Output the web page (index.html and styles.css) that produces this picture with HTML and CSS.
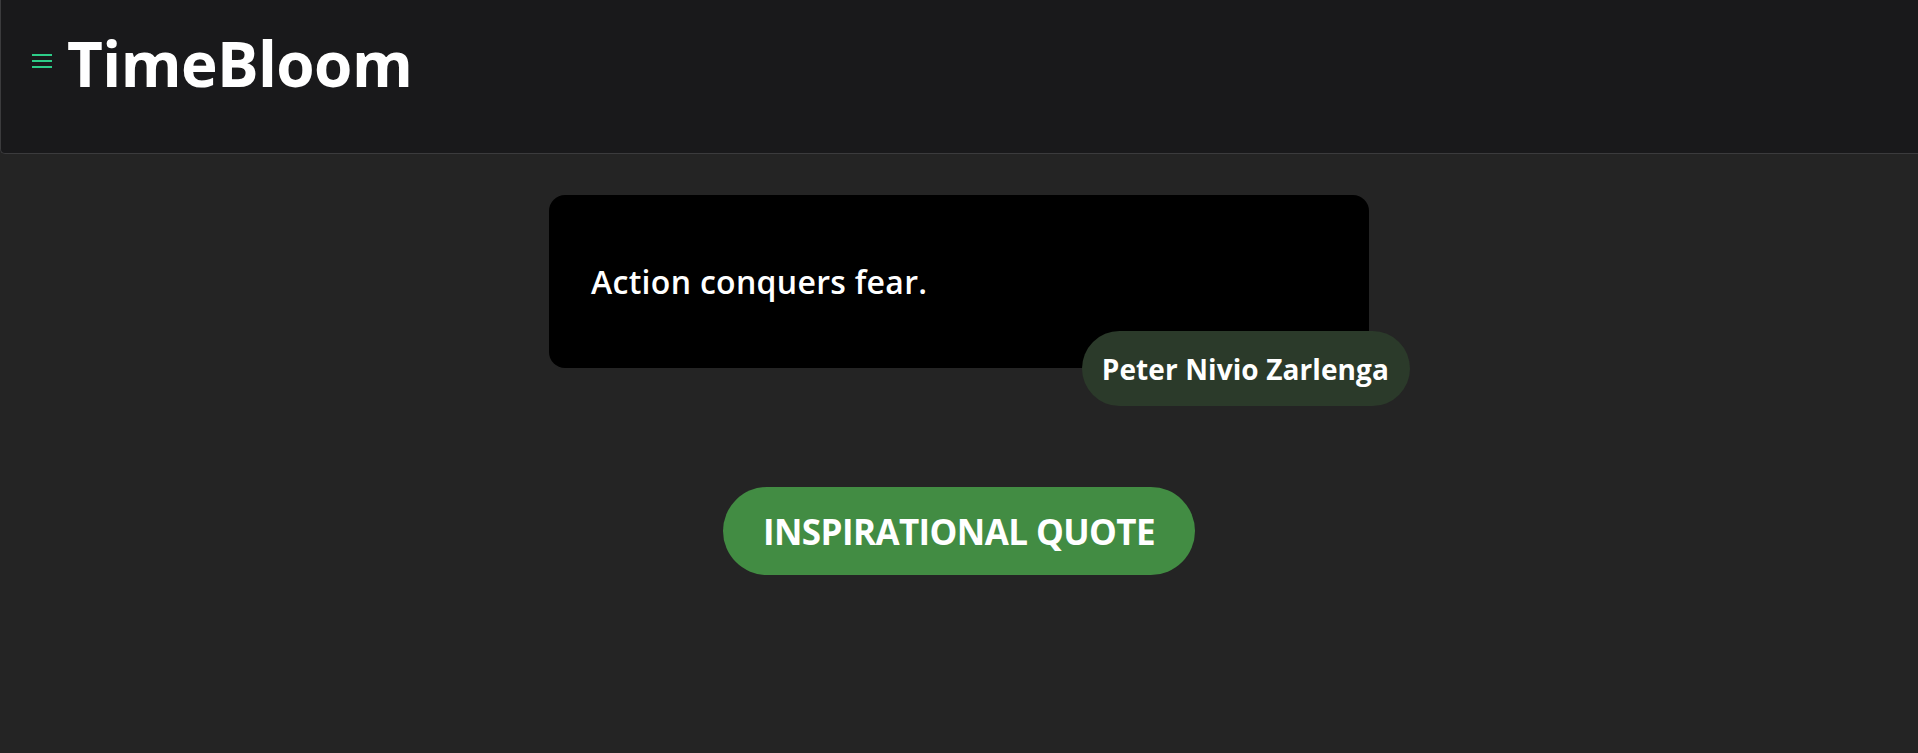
FILE: index.html
```html
<!DOCTYPE html>
<html lang="en">
<head>
<meta charset="utf-8">
<title>TimeBloom</title>
<link rel="stylesheet" href="styles.css">
</head>
<body>
<header class="topbar">
  <button class="menu-btn" aria-label="Menu">
    <svg width="20" height="14" viewBox="0 0 20 14"><rect x="0" y="0" width="20" height="2"/><rect x="0" y="6" width="20" height="2"/><rect x="0" y="12" width="20" height="2"/></svg>
  </button>
  <h1 class="brand">TimeBloom</h1>
</header>
<main class="content">
  <div class="quote-card">
    <p class="quote-text">Action conquers fear.</p>
    <span class="quote-author">Peter Nivio Zarlenga</span>
  </div>
  <button class="quote-btn">INSPIRATIONAL QUOTE</button>
</main>
</body>
</html>
```

FILE: styles.css
```css
* { box-sizing: border-box; }
html, body { margin: 0; padding: 0; }
body {
  background: #242424;
  color: #fff;
  font-family: "Open Sans", "Noto Sans", "Liberation Sans", sans-serif;
  height: 753px;
  overflow: hidden;
}
.topbar {
  height: 154px;
  background: #19191b;
  border-left: 1px solid #3b3b3d;
  border-bottom: 1px solid #3b3b3d;
  border-bottom-left-radius: 5px;
  display: flex;
  align-items: flex-start;
  padding: 23px 0 0 31px;
}
.menu-btn {
  background: none;
  border: 0;
  padding: 0;
  margin: 31px 15px 0 0;
  width: 20px;
  height: 14px;
  display: block;
  fill: #2dcc88;
}
.menu-btn svg { display: block; }
.brand {
  margin: 0;
  font-size: 62px;
  font-weight: 700;
  line-height: 80px;
  letter-spacing: -0.6px;
}
.content {
  display: flex;
  flex-direction: column;
  align-items: center;
  padding-top: 41px;
}
.quote-card {
  position: relative;
  width: 820px;
  height: 173px;
  background: #000;
  border-radius: 16px;
  display: flex;
  align-items: center;
  padding: 0 42px;
}
.quote-text {
  margin: 0;
  font-size: 32px;
  font-weight: 600;
  line-height: 44px;
  letter-spacing: 0.3px;
}
.quote-author {
  position: absolute;
  right: -41px;
  bottom: -38px;
  height: 75px;
  padding: 0 21px 0 20px;
  display: flex;
  align-items: center;
  background: #2b3a2a;
  border-radius: 38px;
  font-weight: 700;
  font-size: 28px;
  letter-spacing: 0.1px;
}
.quote-btn {
  margin-top: 119px;
  height: 88px;
  padding: 0 40px;
  background: #428c43;
  color: #fff;
  border: 0;
  border-radius: 44px;
  font-family: inherit;
  font-weight: 700;
  font-size: 35px;
  letter-spacing: -0.6px;
}
```
